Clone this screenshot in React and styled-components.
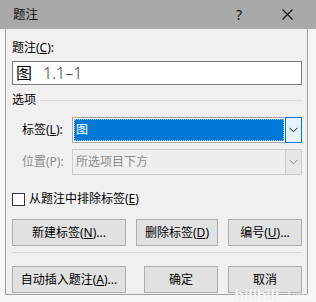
import React from 'react';
import styled, { createGlobalStyle, css } from 'styled-components';

const GlobalStyle = createGlobalStyle`
  html, body {
    margin: 0;
    padding: 0;
    background: #fbfbfb;
  }
  body {
    font-family: "Noto Sans", "Noto Sans CJK SC", sans-serif;
    font-size: 12px;
    color: #000;
  }
`;

const Window = styled.div`
  position: relative;
  width: 316px;
  height: 302px;
  overflow: hidden;
  background: #f6f6f6;
`;

const TitleBar = styled.div`
  height: 29px;
  background: #a9a9a9;
  display: flex;
  align-items: center;
  padding-left: 13px;
  box-sizing: border-box;
`;

const Title = styled.span`
  flex: 1;
  font-size: 12.5px;
  line-height: 16px;
  color: #111;
`;

const Help = styled.span`
  width: 12px;
  margin-right: 34px;
  font-size: 14px;
  line-height: 16px;
  color: #111;
`;

const Close = styled.svg`
  width: 11px;
  height: 11px;
  margin-right: 23px;
`;

const Frame = styled.div`
  margin: 0 8px 0 5px;
  height: 266px;
  box-sizing: border-box;
  background: #f0f0f0;
  border: 1px solid #a0a0a0;
  border-top: none;
  padding: 11px 5px 0 6px;
  display: flex;
  flex-direction: column;
`;

const Label = styled.div`
  line-height: 16px;
  height: 16px;
  white-space: nowrap;
  color: ${({ disabled }) => (disabled ? '#8d8d8d' : '#000')};
  ${({ width }) =>
    width &&
    css`
      width: ${width}px;
      flex: none;
    `};
`;

const Key = styled.u`
  text-decoration: underline;
  text-underline-offset: 1px;
`;

const CaptionInput = styled.div`
  margin-top: 5px;
  height: 24px;
  box-sizing: border-box;
  border: 1px solid #7a7a7a;
  background: #fff;
  display: flex;
  align-items: center;
  padding-left: 3px;
  font-size: 16px;
  line-height: 20px;
`;

const Digits = styled.span`
  margin-left: 11px;
  color: #3a3a3a;
  font-family: "Noto Sans", sans-serif;
  font-weight: 300;
`;

const GroupHead = styled.div`
  margin-top: 7px;
  display: flex;
  align-items: center;
  gap: 4px;
`;

const Rule = styled.div`
  flex: 1;
  height: 1px;
  background: #dcdcdc;
`;

const FieldRow = styled.div`
  display: flex;
  align-items: center;
  padding-left: 10px;
  margin-top: ${({ gap }) => gap}px;
`;

const Combo = styled.div`
  width: 230px;
  height: 26px;
  box-sizing: border-box;
  display: flex;
  border: 1px solid ${({ disabled }) => (disabled ? '#cccccc' : '#a8a8a8')};
  background: ${({ disabled }) => (disabled ? '#eeeeee' : '#fff')};
`;

const ComboValue = styled.div`
  flex: 1;
  display: flex;
  align-items: center;
  padding-left: 3px;
  line-height: 16px;
  ${({ selected }) =>
    selected
      ? css`
          margin: 1px;
          background: #0078d7;
          color: #fff;
          outline: 1px dotted #9cc6ee;
          outline-offset: -1px;
          padding-left: 2px;
        `
      : css`
          color: #8d8d8d;
        `};
`;

const ComboButton = styled.div`
  width: 17px;
  margin: -1px -1px -1px 0;
  display: flex;
  align-items: center;
  justify-content: center;
  box-sizing: border-box;
  ${({ disabled }) =>
    disabled
      ? css`
          border: 1px solid #cccccc;
          background: #e6e6e6;
        `
      : css`
          border: 1px solid #0078d7;
          background: #e5f1fb;
        `};
`;

const Chevron = ({ color }) => (
  <svg width="9" height="6" viewBox="0 0 9 6">
    <path d="M0.5 0.8 L4.5 4.8 L8.5 0.8" fill="none" stroke={color} strokeWidth="1" />
  </svg>
);

const CheckRow = styled.div`
  margin-top: 16px;
  display: flex;
  align-items: center;
  gap: 4px;
`;

const Box = styled.div`
  width: 13px;
  height: 13px;
  box-sizing: border-box;
  border: 1px solid #333;
  background: #fff;
`;

const ButtonRow = styled.div`
  display: flex;
  gap: 10px;
  margin-top: ${({ gap }) => gap}px;
`;

const Button = styled.div`
  width: ${({ width }) => width}px;
  height: 27px;
  box-sizing: border-box;
  border: 1px solid #adadad;
  background: #e1e1e1;
  display: flex;
  align-items: center;
  justify-content: center;
  line-height: 16px;
  white-space: nowrap;
  ${({ push }) =>
    push &&
    css`
      margin-left: 8px;
    `};
`;

const Separator = styled.div`
  height: 1px;
  background: #d5d5d5;
  margin-top: 6px;
`;

const Watermark = styled.div`
  position: absolute;
  right: 2px;
  bottom: 0;
  height: 14px;
  display: flex;
  align-items: flex-end;
  gap: 5px;
  color: rgba(255, 255, 255, 0.9);
  pointer-events: none;
`;

const Logo = styled.span`
  font-family: "DejaVu Sans", sans-serif;
  font-weight: bold;
  font-size: 14px;
  letter-spacing: -0.5px;
  line-height: 14px;
  text-shadow: 0 0 1px rgba(0, 0, 0, 0.2);
`;

const Handle = styled.span`
  font-family: "DejaVu Sans", sans-serif;
  font-size: 10px;
  line-height: 12px;
  opacity: 0.85;
`;

const App = () => (
  <Window>
    <GlobalStyle />
    <TitleBar>
      <Title>题注</Title>
      <Help>?</Help>
      <Close viewBox="0 0 11 11">
        <path d="M0.5 0.5 L10.5 10.5 M10.5 0.5 L0.5 10.5" stroke="#111" strokeWidth="1.1" />
      </Close>
    </TitleBar>
    <Frame>
      <Label>
        题注(<Key>C</Key>):
      </Label>
      <CaptionInput>
        图<Digits>1.1–1</Digits>
      </CaptionInput>
      <GroupHead>
        <Label>选项</Label>
        <Rule />
      </GroupHead>
      <FieldRow gap={9}>
        <Label width={50}>
          标签(<Key>L</Key>):
        </Label>
        <Combo>
          <ComboValue selected>图</ComboValue>
          <ComboButton>
            <Chevron color="#222" />
          </ComboButton>
        </Combo>
      </FieldRow>
      <FieldRow gap={6}>
        <Label width={50} disabled>
          位置(P):
        </Label>
        <Combo disabled>
          <ComboValue>所选项目下方</ComboValue>
          <ComboButton disabled>
            <Chevron color="#8a8a8a" />
          </ComboButton>
        </Combo>
      </FieldRow>
      <CheckRow>
        <Box />
        <Label>
          从题注中排除标签(<Key>E</Key>)
        </Label>
      </CheckRow>
      <ButtonRow gap={12}>
        <Button width={114}>
          新建标签(<Key>N</Key>)...
        </Button>
        <Button width={82}>
          删除标签(<Key>D</Key>)
        </Button>
        <Button width={74}>
          编号(<Key>U</Key>)...
        </Button>
      </ButtonRow>
      <Separator />
      <ButtonRow gap={13}>
        <Button width={114}>
          自动插入题注(<Key>A</Key>)...
        </Button>
        <Button width={74} push>
          确定
        </Button>
        <Button width={74}>取消</Button>
      </ButtonRow>
    </Frame>
    <Watermark>
      <Logo>bilibili</Logo>
      <Handle>-Lyux-</Handle>
    </Watermark>
  </Window>
);

export default App;
